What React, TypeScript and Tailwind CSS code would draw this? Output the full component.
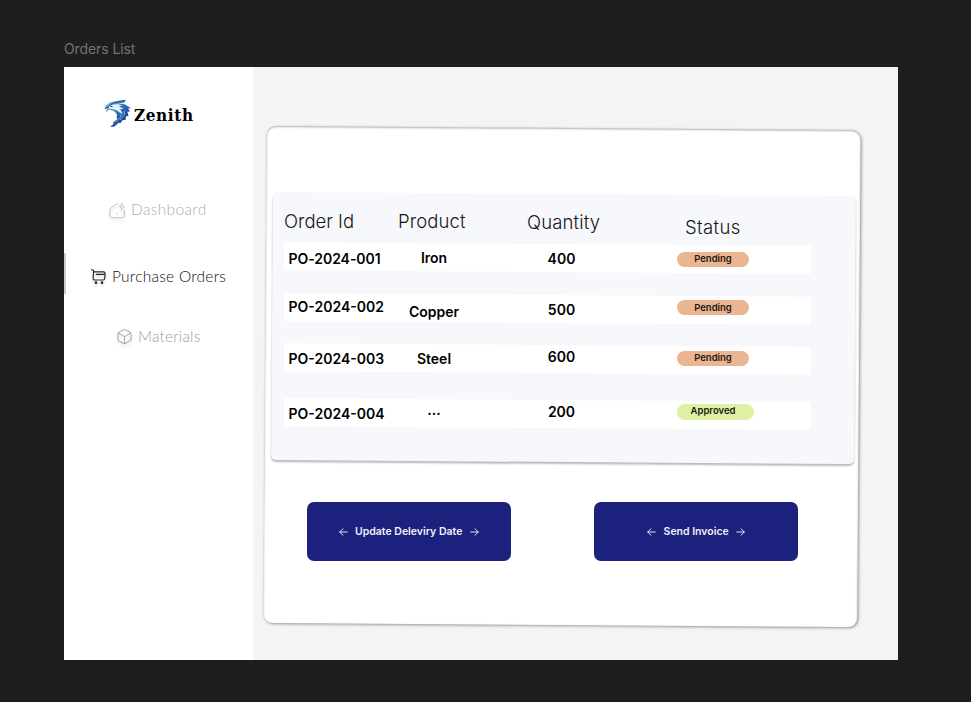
import React from 'react';

type Order = {
  id: string;
  product: string;
  quantity: string;
  status: string;
  row: string;
  idPos: string;
  productPos: string;
  quantityPos: string;
  pill: string;
  label: string;
};

const orders: Order[] = [
  {
    id: 'PO-2024-001', product: 'Iron', quantity: '400', status: 'Pending',
    row: 'mt-[5px]', idPos: 'mt-[5px] tracking-[-0.05px]', productPos: 'mt-[4px]', quantityPos: 'mt-[5px]',
    pill: 'mt-[8px] h-[15px] w-[72px] bg-[#ebb592]', label: '-mt-[1px]',
  },
  {
    id: 'PO-2024-002', product: 'Copper', quantity: '500', status: 'Pending',
    row: 'mt-[22.6px]', idPos: 'mt-[2.4px]', productPos: 'mt-[7.5px]', quantityPos: 'mt-[5px]',
    pill: 'mt-[5.6px] h-[15px] w-[72px] bg-[#ebb592]', label: 'mt-0',
  },
  {
    id: 'PO-2024-003', product: 'Steel', quantity: '600', status: 'Pending',
    row: 'mt-[22.6px]', idPos: 'mt-[4px]', productPos: 'mt-[4px]', quantityPos: 'mt-[2px]',
    pill: 'mt-[6px] h-[15px] w-[72px] bg-[#ebb592]', label: '-mt-[2px]',
  },
  {
    id: 'PO-2024-004', product: '...', quantity: '200', status: 'Approved',
    row: 'mt-[26.8px]', idPos: 'mt-[4px]', productPos: 'mt-0', quantityPos: 'mt-[2.5px]',
    pill: 'mt-[4px] h-[16px] w-[77px] bg-[#dcf1a3]', label: 'mr-[5px] -mt-[2px]',
  },
];

function EagleLogo() {
  return (
    <svg width="28" height="29" viewBox="0 0 28 29" fill="none">
      <defs>
        <linearGradient id="wing" x1="4" y1="3" x2="24" y2="25" gradientUnits="userSpaceOnUse">
          <stop stopColor="#79b7e3" />
          <stop offset=".5" stopColor="#2b6cb9" />
          <stop offset="1" stopColor="#0d2f6b" />
        </linearGradient>
      </defs>
      <path d="M.5 9.5C2 5 6 2.8 11 2.2L22 .8 20.5 3.4 14.5 4.6C19 4.6 21.5 5.4 23 6.8L27 9.2 24 9.6 26 12.5 23.4 12.8 24.5 17 22 17.2 21.5 21 18.8 21 16 24.5 14.8 23.6 10.5 27.5 6 28 10 24.6 8.5 24 13.5 20 12.5 18.6C14 16 12 13 8.5 11.6L4.5 10.6 2.6 13.3C2 12 2.4 10.8 3 9.7Z" fill="url(#wing)" />
      <path d="M4.500 8C8 4.800 14 4.400 17.800 6.400L15 7.200 19.500 9.900 16 10.200 19 14.700 15.600 13.400C13.200 11 9 10 4.800 9.500Z" fill="#e5f2fb" />
      <path d="M17.500 14.500 16.500 18 11.500 23.500M20.500 12 20.300 16 16 21" stroke="#9fcdf0" strokeWidth=".7" />
      <path d="M4 8.100C8 3.300 12 3.300 20.700 1.700M1 9.800C1.800 8.600 3 8.300 4.500 8.500" stroke="#174174" strokeWidth=".9" />
      <path d="m6.500 7.200 2 .5" stroke="#132c50" strokeWidth="1" />
    </svg>
  );
}

function HomeIcon() {
  return (
    <svg className="drop-shadow-[0_3px_1px_rgba(0,0,0,0.1)]" width="17" height="17" viewBox="0 0 17 17" fill="none" stroke="#bcbcc1" strokeLinecap="round" strokeLinejoin="round">
      <path d="M9.200 1.200C8 .7 7 1.100 6 1.900L2 5.100C1 6 .9 6.800.9 8v4.300c0 1.600.9 2.500 2.500 2.500h9.400c1.600 0 2.500-.9 2.500-2.500V7.500" />
      <path d="M12.800.8c.3 1.800.8 2.400 2.600 2.800-1.800.4-2.300 1-2.600 2.800-.4-1.800-1-2.400-2.700-2.800 1.800-.4 2.300-1 2.700-2.800ZM8.100 10.200v.7" />
    </svg>
  );
}

function CartIcon() {
  return (
    <svg className="drop-shadow-[0_3px_1px_rgba(0,0,0,0.12)]" width="15" height="16" viewBox="0 0 15 16" fill="none" stroke="#242424" strokeWidth="1.150" strokeLinecap="round" strokeLinejoin="round">
      <path d="M.6.8h.8c.8 0 1.200.5 1.200 1.200l-.5 7.200c-.1 1.100.5 1.800 1.700 1.800h8.300c1 0 1.500-.6 1.600-1.500l.4-5c.1-1-.5-1.600-1.500-1.600H2.600M5.200 5.300h8.200" />
      <circle cx="5" cy="13.700" r=".8" />
      <circle cx="11" cy="13.700" r=".8" />
    </svg>
  );
}

function BoxIcon() {
  return (
    <svg className="drop-shadow-[0_3px_1px_rgba(0,0,0,0.1)]" width="15" height="16" viewBox="0 0 15 16" fill="none" stroke="#aaaab2" strokeWidth="1.050" strokeLinecap="round" strokeLinejoin="round">
      <path d="M6.400.9c.8-.4 1.400-.4 2.200 0l4.300 2.300c.8.5 1.200 1.100 1.200 2v4.600c0 .9-.4 1.500-1.200 2l-4.300 2.400c-.8.4-1.400.4-2.200 0L2.100 11.800C1.300 11.300.9 10.700.9 9.800V5.200c0-.9.4-1.500 1.200-2L6.400.9ZM1.300 4.100l6.200 3.500 6.200-3.500M7.500 7.600v6.700" />
    </svg>
  );
}

function Arrow({ left = false }: { left?: boolean }) {
  return (
    <svg width="9" height="8" viewBox="0 0 9 8" fill="none" stroke="#e4e5f2" strokeWidth="1" strokeLinecap="round" strokeLinejoin="round">
      {left ? <path d="M8.300 4H.7M4 .7.7 4 4 7.300" /> : <path d="M.7 4h7.600M5 .7 8.300 4 5 7.300" />}
    </svg>
  );
}

function ActionButton({ children }: { children: React.ReactNode }) {
  return (
    <button className="flex h-[59px] w-[204px] items-center justify-center gap-[7.500px] rounded-[7px] bg-[#1b217c] text-[10.500px] font-semibold leading-[20px] text-[#f0f0fa]">
      <Arrow left />
      <span className="whitespace-nowrap">{children}</span>
      <Arrow />
    </button>
  );
}

export default function App() {
  return (
    <div className="h-[702px] w-[971px] overflow-hidden bg-[#1e1e1e] pl-[64px] pt-[39px] font-['Inter',sans-serif]">
      <div className="h-[28px] text-[14px] leading-[20px] tracking-[-0.1px] text-[#747474]">Orders List</div>
      <div className="flex h-[593px] w-[834px] overflow-hidden bg-[#f4f4f4]">
        <aside className="h-full w-[189px] shrink-0 bg-white font-['Lato',sans-serif] font-light">
          <div className="flex h-[94px] pl-[40px] pt-[32px]">
            <EagleLogo />
            <span className="ml-[2px] mt-[5px] font-['DejaVu_Serif_Condensed','DejaVu_Serif',serif] text-[17px] font-bold [font-stretch:condensed] leading-[22px] tracking-[0.6px] text-black">Zenith</span>
          </div>
          <nav className="pt-[39px] text-[15.500px] leading-[20px]">
            <div className="flex h-[20px] gap-[5px] pl-[45px] text-[#aeaeb4]">
              <div className="pt-[3px]"><HomeIcon /></div>
              <span className="-mt-[1px] tracking-[0.350px]">Dashboard</span>
            </div>
            <div className="mt-[33px] flex h-[41px] border-l-2 border-[#c9c9d2] pl-[25px] pt-[13px] text-[#101010]">
              <div className="pt-[3px]"><CartIcon /></div>
              <span className="ml-[6px] whitespace-nowrap tracking-[0.250px]">Purchase Orders</span>
            </div>
            <div className="mt-[33px] flex h-[20px] gap-[6px] pl-[53px] text-[#9c9ca5]">
              <div className="pt-[2px]"><BoxIcon /></div>
              <span className="-mt-[1px] tracking-[0.150px]">Materials</span>
            </div>
          </nav>
        </aside>

        <main className="pl-[13px] pt-[62px]">
          <section className="grid h-[497px] w-[594px]">
            <div className="-mt-[0.700px] mb-[0.700px] -ml-[0.600px] mr-[0.600px] rotate-[0.4deg] rounded-[9px] bg-white shadow-[1px_1px_3px_rgba(0,0,0,0.4),inset_0_1px_2px_rgba(0,0,0,0.3)] [grid-area:1/1]" />
            <div className="z-10 [grid-area:1/1]">
              <div className="ml-[6px] mt-[65px] grid h-[268px] w-[583px]">
                <div className="rotate-[0.4deg] rounded-[5px] bg-[#f7f8fc] shadow-[0_2px_2px_rgba(0,0,0,0.28)] [grid-area:1/1]" />
                <div className="z-10 pl-[12px] text-black [grid-area:1/1]">
                  <header className="flex h-[45px] text-[18.500px] font-light leading-[24px] text-[#171717]">
                    <span className="mt-[14.500px] w-[114px]">Order Id</span>
                    <span className="mt-[14.500px] w-[129px] tracking-[0.1px]">Product</span>
                    <span className="mt-[16px] w-[158px] tracking-[0.150px]">Quantity</span>
                    <span className="mt-[21px] tracking-[0.350px]">Status</span>
                  </header>
                  {orders.map((o) => (
                    <div key={o.id} className={`grid h-[28px] w-[527px] ${o.row}`}>
                      <div className="rotate-[0.4deg] bg-white [grid-area:1/1]" />
                      <div className="z-10 grid grid-cols-[105px_90px_164px_168px] items-start text-[14px] font-semibold leading-[20px] [grid-area:1/1]">
                        <span className={`whitespace-nowrap pl-[4.500px] ${o.idPos}`}>{o.id}</span>
                        <span className={`text-center ${o.productPos}`}>{o.product}</span>
                        <span className={`pl-[1px] text-center ${o.quantityPos}`}>{o.quantity}</span>
                        <div className={`ml-[34px] flex items-center justify-center rounded-full text-[9.500px] leading-[12px] text-[#1c1712] ${o.pill}`}>
                          <span className={o.label}>{o.status}</span>
                        </div>
                      </div>
                    </div>
                  ))}
                </div>
              </div>
              <div className="ml-[40.700px] mt-[40.400px] flex gap-[83.500px]">
                <ActionButton>Update Deleviry Date</ActionButton>
                <ActionButton>Send Invoice</ActionButton>
              </div>
            </div>
          </section>
        </main>
      </div>
    </div>
  );
}
